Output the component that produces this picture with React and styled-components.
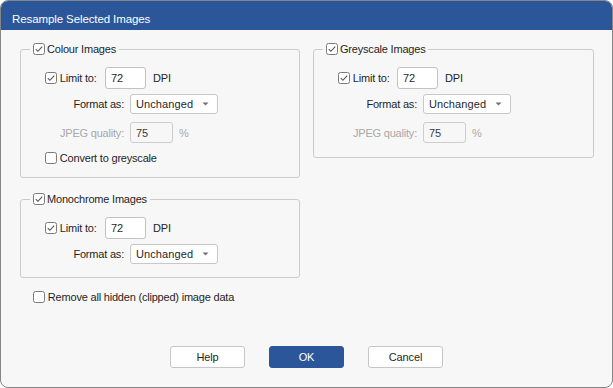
import React from 'react';
import styled, { createGlobalStyle } from 'styled-components';

const GlobalStyle = createGlobalStyle`
  html, body { margin: 0; padding: 0; background: #ffffff; }
  body { font-family: "Liberation Sans", Arial, sans-serif; }
  * { box-sizing: border-box; }
`;

const Window = styled.div`
  width: 613px;
  height: 388px;
  border: 1px solid #868686;
  border-radius: 8px;
  overflow: hidden;
  background: #f7f7f7;
  display: flex;
  flex-direction: column;
  font-family: "Liberation Sans", Arial, sans-serif;
  font-size: 11px;
  letter-spacing: -0.2px;
  line-height: 14px;
  color: #1f1f1f;
`;

const TitleBar = styled.div`
  height: 29px;
  flex: none;
  background: #2b579a;
  color: #ffffff;
  padding: 11px 0 0 11px;
  font-size: 11.5px;
  letter-spacing: -0.1px;
`;

const Body = styled.div`
  flex: 1;
  display: flex;
  flex-direction: column;
  padding: 12px 19px 19px 19px;
`;

const Groups = styled.div`
  display: grid;
  grid-template-columns: 280px 281px;
  column-gap: 13px;
  row-gap: 14px;
  align-items: start;
`;

const Group = styled.fieldset`
  margin: 0;
  min-width: 0;
  padding: 11px 0 ${(p) => p.$pb}px 0;
  border: 1px solid #cbcbcb;
  border-radius: 3px;
  display: flex;
  flex-direction: column;
`;

const Legend = styled.legend`
  margin-left: 9px;
  padding: 0 3px;
  height: 14px;
  display: flex;
  align-items: center;
  gap: 2px;
`;

const Row = styled.div`
  display: flex;
  align-items: center;
  height: ${(p) => p.$h}px;
  margin-top: ${(p) => p.$mt || 0}px;
  padding-left: ${(p) => p.$pl || 0}px;
`;

const CheckLabel = styled.span`
  width: ${(p) => (p.$w ? `${p.$w}px` : 'auto')};
  flex: none;
  white-space: nowrap;
`;

const FieldLabel = styled.span`
  width: 103px;
  flex: none;
  text-align: right;
  margin-right: 6px;
  white-space: nowrap;
  color: ${(p) => (p.$disabled ? '#a8a8a8' : '#1f1f1f')};
`;

const TextBox = styled.input`
  width: ${(p) => p.$w}px;
  height: ${(p) => p.$h}px;
  flex: none;
  margin: 0;
  padding: 0 0 0 5px;
  border: 1px solid ${(p) => (p.disabled ? '#cdcdcd' : '#c2c2c2')};
  border-radius: 3px;
  background: ${(p) => (p.disabled ? '#f7f7f7' : '#ffffff')};
  font-family: "Liberation Sans", Arial, sans-serif;
  font-size: 11px;
  letter-spacing: -0.2px;
  color: ${(p) => (p.disabled ? '#3a3a3a' : '#1f1f1f')};
  outline: none;
`;

const Unit = styled.span`
  margin-left: ${(p) => p.$ml}px;
  color: ${(p) => (p.$disabled ? '#a8a8a8' : '#1f1f1f')};
`;

const Select = styled.div`
  width: ${(p) => p.$w}px;
  height: 20px;
  flex: none;
  border: 1px solid #c8c8c8;
  border-radius: 3px;
  background: #ffffff;
  display: flex;
  align-items: center;
  justify-content: space-between;
  padding: 0 8px 0 5px;
  letter-spacing: 0.1px;
`;

const Footer = styled.div`
  margin-top: auto;
  display: flex;
  justify-content: center;
  gap: 24px;
`;

const Button = styled.button`
  width: 75px;
  height: 22px;
  margin: 0;
  padding: 0;
  border: 1px solid ${(p) => (p.$primary ? '#2b579a' : '#c6c6c6')};
  border-radius: 3px;
  background: ${(p) => (p.$primary ? '#2b579a' : '#ffffff')};
  color: ${(p) => (p.$primary ? '#ffffff' : '#1f1f1f')};
  font-family: "Liberation Sans", Arial, sans-serif;
  font-size: 11px;
  letter-spacing: -0.1px;
`;

const BoxSvg = styled.svg`
  flex: none;
  display: block;
`;

function CheckBox({ checked }) {
  return (
    <BoxSvg width="12" height="12" viewBox="0 0 12 12">
      <rect x="0.5" y="0.5" width="11" height="11" rx="2" fill="#ffffff" stroke="#7a7a7a" />
      {checked && (
        <path d="M2.8 6.1 L4.9 8.3 L9.2 3.6" fill="none" stroke="#555555" strokeWidth="1.1" />
      )}
    </BoxSvg>
  );
}

function Arrow() {
  return (
    <svg width="7" height="4" viewBox="0 0 7 4">
      <path d="M0.5 0.5 L6.5 0.5 L3.5 3.5 Z" fill="#707070" />
    </svg>
  );
}

function FormatRow() {
  return (
    <Row $h={20} $mt={5}>
      <FieldLabel>Format as:</FieldLabel>
      <Select $w={88}>
        <span>Unchanged</span>
        <Arrow />
      </Select>
    </Row>
  );
}

function LimitRow({ labelW }) {
  return (
    <Row $h={22} $pl={24}>
      <CheckBox checked />
      <CheckLabel $w={labelW}>&nbsp;Limit to:</CheckLabel>
      <TextBox $w={41} $h={22} readOnly value="72" />
      <Unit $ml={7}>DPI</Unit>
    </Row>
  );
}

function JpegRow() {
  return (
    <Row $h={21} $mt={8}>
      <FieldLabel $disabled>JPEG quality:</FieldLabel>
      <TextBox $w={43} $h={21} disabled readOnly value="75" />
      <Unit $ml={6} $disabled>%</Unit>
    </Row>
  );
}

export default function App() {
  return (
    <>
      <GlobalStyle />
      <Window>
        <TitleBar>Resample Selected Images</TitleBar>
        <Body>
          <Groups>
            <Group $pb={12}>
              <Legend>
                <CheckBox checked />
                <span>Colour Images</span>
              </Legend>
              <LimitRow labelW={48} />
              <FormatRow />
              <JpegRow />
              <Row $h={14} $mt={8} $pl={24}>
                <CheckBox />
                <CheckLabel>&nbsp;Convert to greyscale</CheckLabel>
              </Row>
            </Group>
            <Group $pb={14}>
              <Legend>
                <CheckBox checked />
                <span>Greyscale Images</span>
              </Legend>
              <LimitRow labelW={47} />
              <FormatRow />
              <JpegRow />
            </Group>
            <Group $pb={13}>
              <Legend>
                <CheckBox checked />
                <span>Monochrome Images</span>
              </Legend>
              <LimitRow labelW={48} />
              <FormatRow />
            </Group>
          </Groups>
          <Row $h={14} $mt={12} $pl={13}>
            <CheckBox />
            <CheckLabel>&nbsp;Remove all hidden (clipped) image data</CheckLabel>
          </Row>
          <Footer>
            <Button>Help</Button>
            <Button $primary>OK</Button>
            <Button>Cancel</Button>
          </Footer>
        </Body>
      </Window>
    </>
  );
}
